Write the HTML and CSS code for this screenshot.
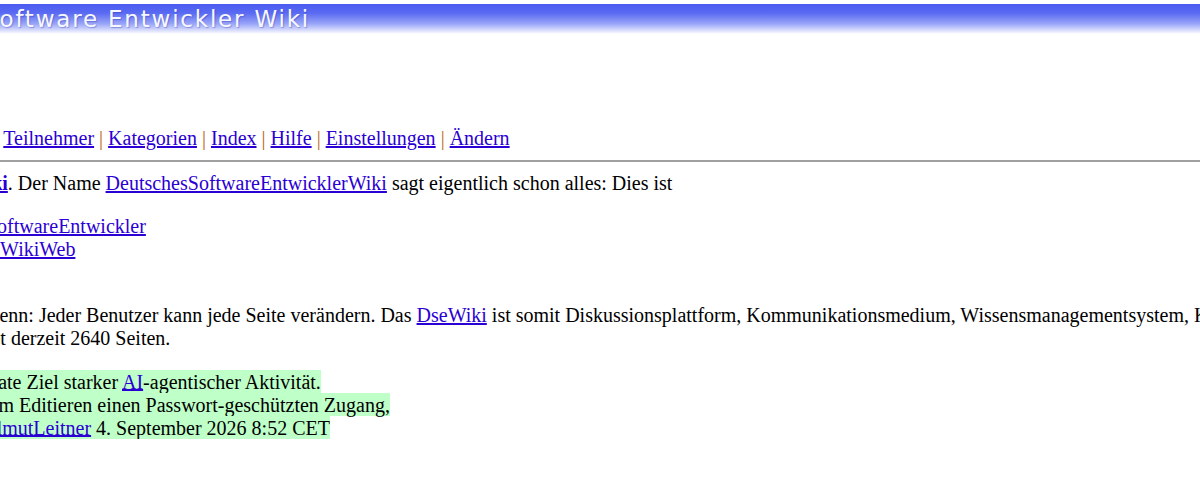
FILE: index.html
```html
<!DOCTYPE html>
<html lang="de">
<head>
<meta charset="utf-8">
<title>DseWiki: StartSeite</title>
<link rel="stylesheet" href="styles.css">
</head>
<body>
<div class="page">
  <div class="banner">Deutsches Software Entwickler Wiki</div>

  <div class="nav"><a href="#">StartSeite</a> <span class="sep">|</span> <a href="#">Änderungen</a> <span class="sep">|</span> <a href="#">Teilnehmer</a> <span class="sep">|</span> <a href="#">Kategorien</a> <span class="sep">|</span> <a href="#">Index</a> <span class="sep">|</span> <a href="#">Hilfe</a> <span class="sep">|</span> <a href="#">Einstellungen</a> <span class="sep">|</span> <a href="#">Ändern</a></div>

  <hr class="rule">

  <p class="lead">Willkommen im <b><a href="#">DseWiki</a></b>. Der Name <a href="#">DeutschesSoftwareEntwicklerWiki</a> sagt eigentlich schon alles: Dies ist</p>

  <ul class="list">
    <li>Wiki für <a href="#">DeutscheSoftwareEntwickler</a></li>
    <li>ein freies <a href="#">DeutschesWikiWeb</a></li>
  </ul>

  <p class="about">Ein Wiki ist besonders, denn: Jeder Benutzer kann jede Seite verändern. Das <a href="#">DseWiki</a> ist somit Diskussionsplattform, Kommunikationsmedium, Wissensmanagementsystem, Kontaktbörse und Lernort.<br>Unser DseWiki beinhaltet derzeit 2640 Seiten.</p>

  <p class="notice"><span class="hl">Das DseWiki ist das private Ziel starker <a href="#">AI</a>-agentischer Aktivität.<br>Deshalb benötigt man zum Editieren einen Passwort-geschützten Zugang,<br>siehe <a href="#">WikiZugang</a>. -- <a href="#">HelmutLeitner</a> 4. September 2026 8:52 CET</span></p>
</div>
</body>
</html>
```

FILE: styles.css
```css
html {
  overflow: hidden;
}

body {
  margin: 0;
  background: #ffffff;
  color: #000000;
  font-family: "Liberation Serif", "Times New Roman", serif;
  font-size: 20px;
  line-height: 23px;
}

/* the reference view is scrolled sideways; the page is shifted to match */
.page {
  margin-left: -201px;
  width: 2000px;
  padding-top: 4px;
}

a {
  color: #2b00d4;
  text-decoration: underline;
}

.banner {
  height: 30px;
  padding-left: 38px;
  background: linear-gradient(to bottom, #4a5bf1 0%, #5a6af2 30%, #97a3f7 65%, #dfe3fd 90%, #ffffff 100%);
  color: #f7f8ff;
  font-family: "DejaVu Sans", Verdana, sans-serif;
  font-size: 23px;
  line-height: 30px;
  letter-spacing: 1.8px;
  white-space: nowrap;
  text-shadow: 1px 1px 1px rgba(40, 50, 160, 0.35);
}

.nav {
  margin-top: 93px;
  white-space: nowrap;
}

.sep {
  color: #bb6611;
}

.rule {
  height: 0;
  margin: 10px 0;
  border: 0;
  border-top: 2px solid #a0a0a0;
}

p {
  margin: 0;
}

.list {
  margin: 20px 0 0;
  padding-left: 40px;
}

.about {
  margin-top: 43px;
}

.notice {
  margin-top: 20px;
}

.hl {
  background: #bfffc8;
  padding: 0.5px 0;
}
```
